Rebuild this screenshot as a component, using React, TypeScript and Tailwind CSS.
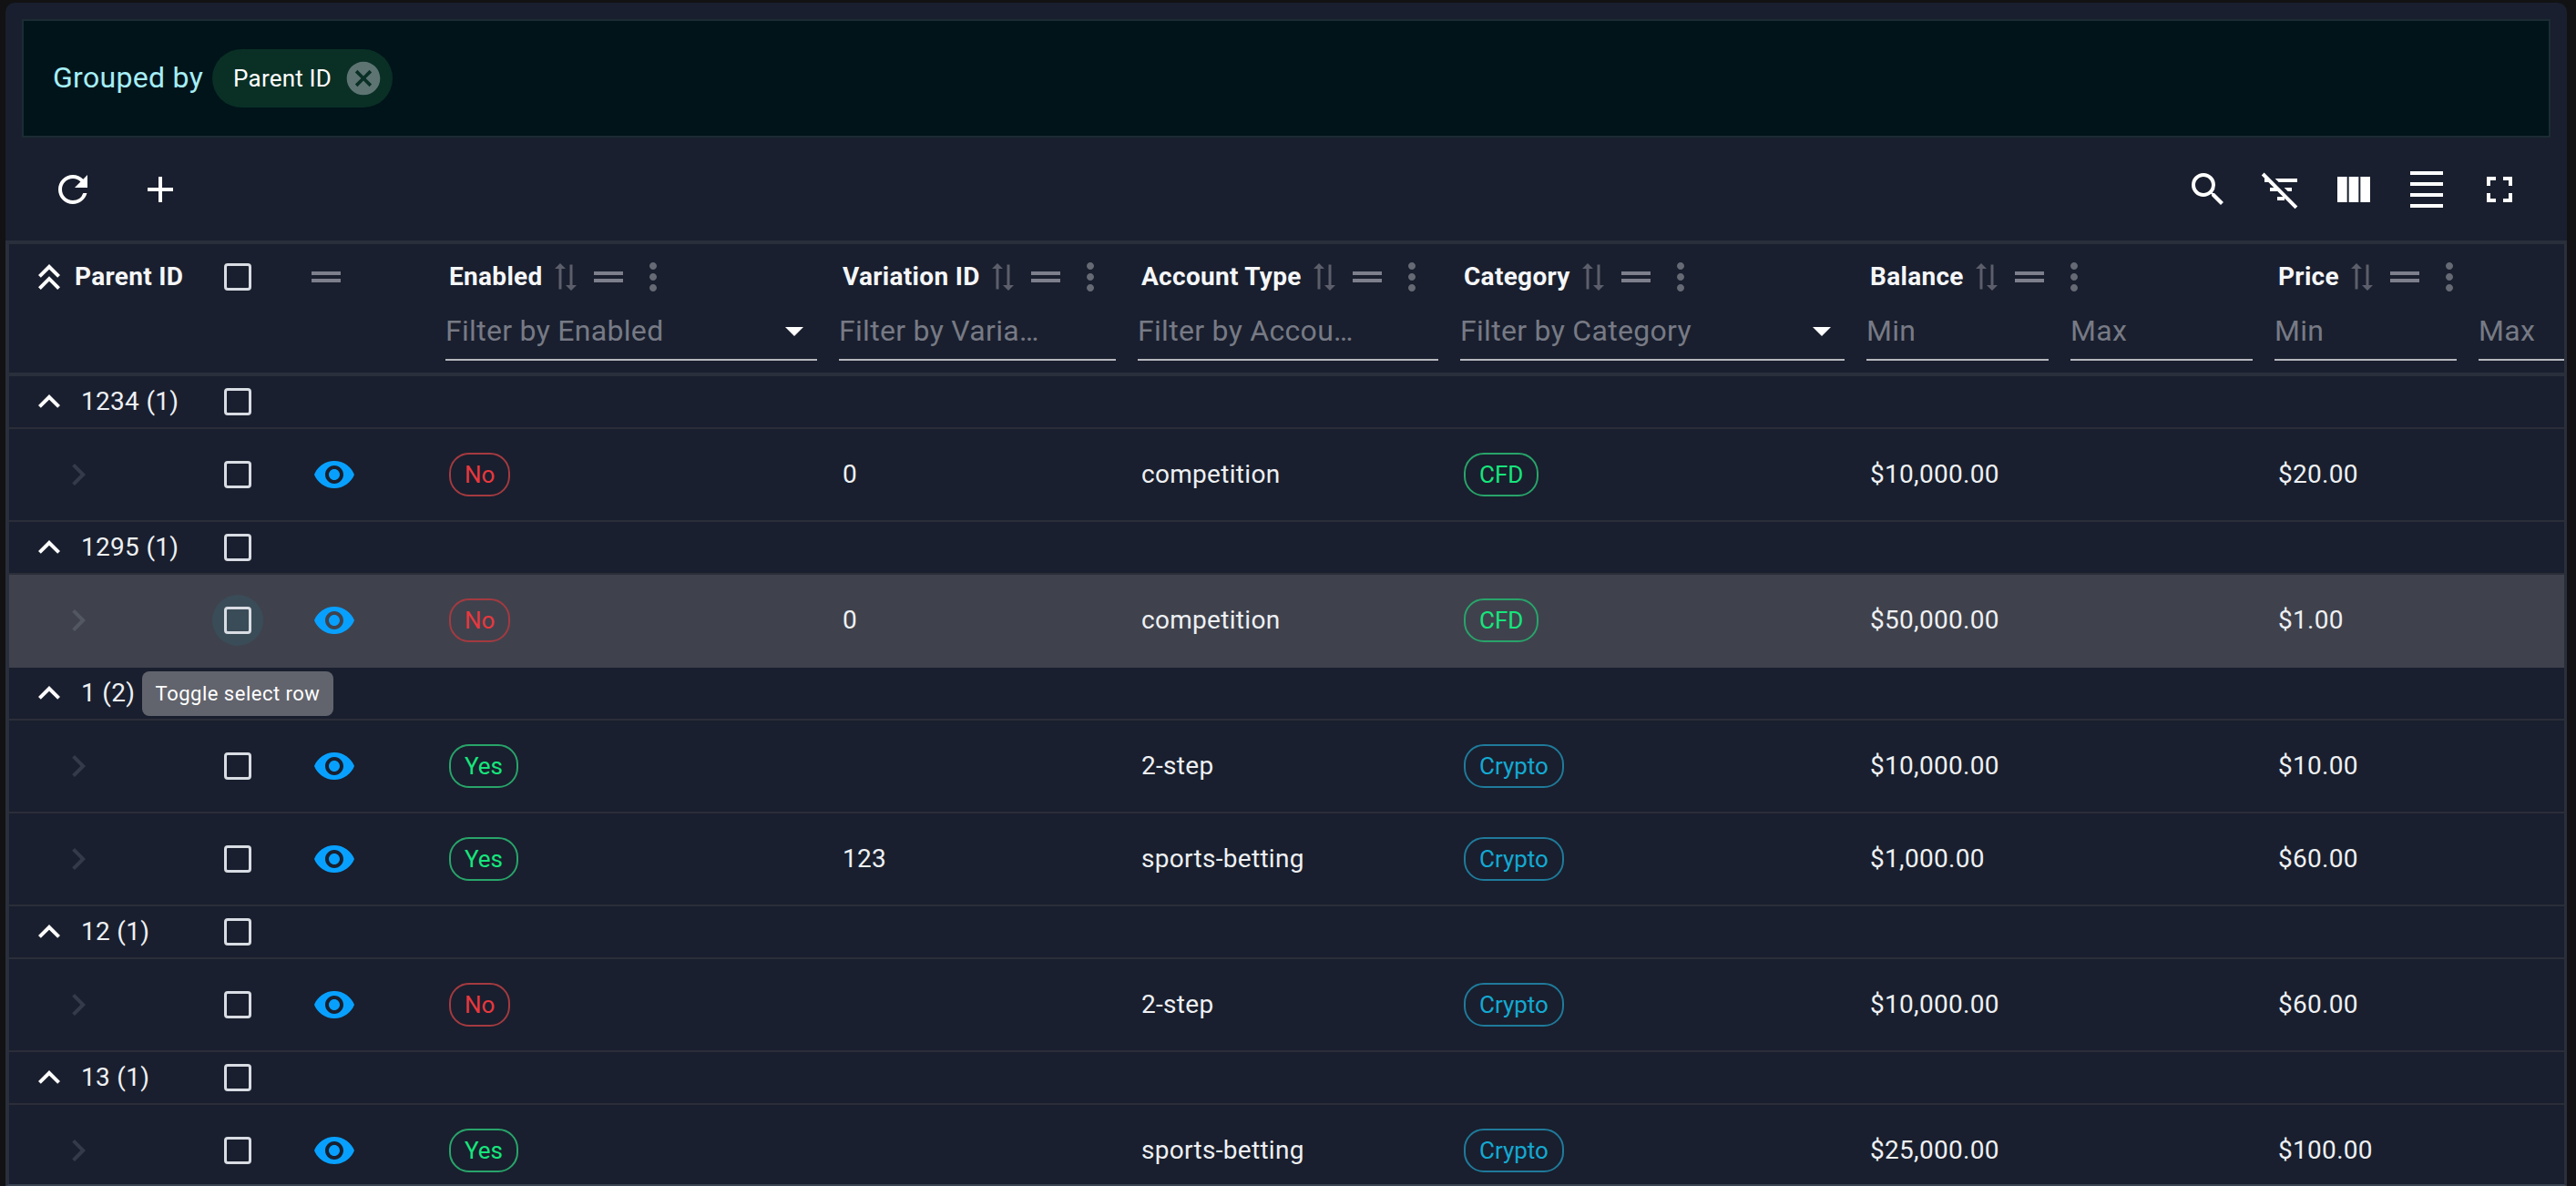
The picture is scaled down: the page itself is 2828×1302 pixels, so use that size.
import {
  MdAdd,
  MdArrowDropDown,
  MdCancel,
  MdChevronRight,
  MdDensitySmall,
  MdDragHandle,
  MdExpandLess,
  MdFilterListOff,
  MdFullscreen,
  MdKeyboardDoubleArrowUp,
  MdMoreVert,
  MdRefresh,
  MdSearch,
  MdSyncAlt,
  MdViewColumn,
  MdVisibility,
} from "react-icons/md";

const gridCols = "grid grid-cols-[206px_90px_171px_432px_328px_354px_446px_448px_448px]";

type Row = {
  enabled: "Yes" | "No";
  variation: string;
  type: string;
  category: "CFD" | "Crypto";
  balance: string;
  price: string;
  hover?: boolean;
};

const groups: { id: string; rows: Row[] }[] = [
  { id: "1234 (1)", rows: [{ enabled: "No", variation: "0", type: "competition", category: "CFD", balance: "$10,000.00", price: "$20.00" }] },
  { id: "1295 (1)", rows: [{ enabled: "No", variation: "0", type: "competition", category: "CFD", balance: "$50,000.00", price: "$1.00", hover: true }] },
  {
    id: "1 (2)",
    rows: [
      { enabled: "Yes", variation: "", type: "2-step", category: "Crypto", balance: "$10,000.00", price: "$10.00" },
      { enabled: "Yes", variation: "123", type: "sports-betting", category: "Crypto", balance: "$1,000.00", price: "$60.00" },
    ],
  },
  { id: "12 (1)", rows: [{ enabled: "No", variation: "", type: "2-step", category: "Crypto", balance: "$10,000.00", price: "$60.00" }] },
  { id: "13 (1)", rows: [{ enabled: "Yes", variation: "", type: "sports-betting", category: "Crypto", balance: "$25,000.00", price: "$100.00" }] },
];

const Checkbox = () => (
  <div className="w-[30px] h-[30px] border-[3px] border-[#d8dce3] rounded-[4px] shrink-0" />
);

const Badge = ({ label }: { label: string }) => {
  const tone =
    label === "No"
      ? "border-[#a43a40] text-[#e8383e]"
      : label === "Crypto"
        ? "border-[#1f7a9b] text-[#14a9d2]"
        : "border-[#28a46a] text-[#16e67c]";
  return (
    <span className={`inline-flex items-center h-[48px] px-[15px] border-2 rounded-[22px] text-[26px] tracking-normal ${tone}`}>
      {label}
    </span>
  );
};

const ColumnTitle = ({ title }: { title: string }) => (
  <div className="flex items-center h-[48px] pl-[16px]">
    <span className="text-[28px] font-bold tracking-[0.3px] text-[#f5f6f8] whitespace-nowrap">{title}</span>
    <MdSyncAlt className="ml-[7px] w-[36px] h-[36px] rotate-90 text-[#5c5f6b] shrink-0" />
    <MdDragHandle className="ml-[5px] w-[48px] h-[48px] text-[#7d7f8c] shrink-0" />
    <MdMoreVert className="ml-[1px] w-[48px] h-[48px] text-[#666a75] shrink-0" />
  </div>
);

const FilterInput = ({ text, select }: { text: string; select?: boolean }) => (
  <div className="flex items-center justify-between h-[58px] pb-[6px] border-b-2 border-[#b5b7bd]">
    <span className="text-[32px] tracking-[0.3px] text-[#777a85] whitespace-nowrap">{text}</span>
    {select && <MdArrowDropDown className="w-[48px] h-[48px] text-white mr-[1px] shrink-0" />}
  </div>
);

const HeaderCell = ({ title, filter, select }: { title: string; filter: string; select?: boolean }) => (
  <div className="pt-[12px]">
    <ColumnTitle title={title} />
    <div className="px-[12px] mt-[10px]">
      <FilterInput text={filter} select={select} />
    </div>
  </div>
);

const RangeHeaderCell = ({ title }: { title: string }) => (
  <div className="pt-[12px]">
    <ColumnTitle title={title} />
    <div className="grid grid-cols-2 gap-[24px] px-[12px] mt-[10px]">
      <FilterInput text="Min" />
      <FilterInput text="Max" />
    </div>
  </div>
);

const Header = () => (
  <div className={`${gridCols} h-[145px] border-b-4 border-[#2a2f3c]`}>
    <div className="flex items-start pt-[12px] pl-[20px]">
      <MdKeyboardDoubleArrowUp className="w-[48px] h-[48px] text-white shrink-0" />
      <span className="ml-[4px] mt-[3px] text-[28px] font-bold tracking-[0.3px] text-[#f5f6f8] whitespace-nowrap">Parent ID</span>
    </div>
    <div className="flex justify-center pt-[21px]">
      <Checkbox />
    </div>
    <div className="pt-[12px] pl-[28px]">
      <MdDragHandle className="w-[48px] h-[48px] text-[#7d7f8c]" />
    </div>
    <HeaderCell title="Enabled" filter="Filter by Enabled" select />
    <HeaderCell title="Variation ID" filter="Filter by Varia…" />
    <HeaderCell title="Account Type" filter="Filter by Accou…" />
    <HeaderCell title="Category" filter="Filter by Category" select />
    <RangeHeaderCell title="Balance" />
    <RangeHeaderCell title="Price" />
  </div>
);

const GroupRow = ({ label, tooltip }: { label: string; tooltip?: boolean }) => (
  <div className={`${gridCols} relative h-[58px] border-b-2 border-[#2b2e39]`}>
    <div className="flex items-center pl-[20px]">
      <MdExpandLess className="w-[48px] h-[48px] text-white shrink-0" />
      <span className="ml-[11px] text-[28px] tracking-[0.3px] text-[#eef0f3] whitespace-nowrap">{label}</span>
    </div>
    <div className="flex items-center justify-center">{!tooltip && <Checkbox />}</div>
    {tooltip && (
      <div className="absolute left-[146px] top-[4px] h-[49px] w-[210px] flex items-center justify-center rounded-[8px] bg-[#62646d] text-[22px] tracking-[0.5px] text-white whitespace-nowrap">
        Toggle select row
      </div>
    )}
  </div>
);

const DataRow = ({ row }: { row: Row }) => (
  <div className={`${gridCols} items-center h-[102px] border-b-2 text-[28px] tracking-[0.3px] text-[#eef0f3] ${row.hover ? "bg-[#3f424d] border-[#3f424d]" : "border-[#2b2e39]"}`}>
    <div className="pl-[52px]">
      <MdChevronRight className={`w-[48px] h-[48px] ${row.hover ? "text-[#525762]" : "text-[#343a4a]"}`} />
    </div>
    <div className="flex justify-center">
      {row.hover ? (
        <div className="flex items-center justify-center w-[56px] h-[56px] rounded-full bg-[#3a4c58]">
          <Checkbox />
        </div>
      ) : (
        <Checkbox />
      )}
    </div>
    <div className="pl-[37px]">
      <MdVisibility className="w-[48px] h-[48px] text-[#08a0ff]" />
    </div>
    <div className="pl-[16px]">
      <Badge label={row.enabled} />
    </div>
    <div className="pl-[16px]">{row.variation}</div>
    <div className="pl-[16px]">{row.type}</div>
    <div className="pl-[16px]">
      <Badge label={row.category} />
    </div>
    <div className="pl-[16px]">{row.balance}</div>
    <div className="pl-[16px]">{row.price}</div>
  </div>
);

const ToolButton = ({ children }: { children: React.ReactNode }) => (
  <div className="flex items-center justify-center w-[80px] h-[80px] text-white">{children}</div>
);

export default function App() {
  return (
    <div className="w-[2828px] h-[1302px] overflow-hidden bg-[#121214] pt-[3px] pl-[6px] pr-[10px] font-['Roboto',sans-serif]">
      <div className="h-[1299px] flex flex-col overflow-hidden rounded-t-[10px] bg-[#191f2e]">
        {/* Group banner */}
        <div className="flex items-center shrink-0 h-[130px] mt-[18px] mx-[18px] pl-[32px] border-2 border-[#1c2c34] bg-[#01141a]">
          <span className="text-[32px] tracking-[0.3px] text-[#a6eef6] whitespace-nowrap mb-[3px]">Grouped by</span>
          <div className="flex items-center h-[64px] ml-[10px] pl-[23px] pr-[10px] rounded-full bg-[#0a3025]">
            <span className="text-[26px] tracking-[0.2px] text-white whitespace-nowrap">Parent ID</span>
            <MdCancel className="ml-[13px] w-[44px] h-[44px] text-[#5e7473]" />
          </div>
        </div>

        {/* Toolbar */}
        <div className="flex items-center justify-between shrink-0 h-[113px] px-[34px]">
          <div className="flex items-center gap-[16px]">
            <ToolButton><MdRefresh className="w-[48px] h-[48px]" /></ToolButton>
            <ToolButton><MdAdd className="w-[48px] h-[48px]" /></ToolButton>
          </div>
          <div className="flex items-center">
            <ToolButton><MdSearch className="w-[48px] h-[48px]" /></ToolButton>
            <ToolButton><MdFilterListOff className="w-[48px] h-[48px]" /></ToolButton>
            <ToolButton><MdViewColumn className="w-[48px] h-[48px]" /></ToolButton>
            <ToolButton><MdDensitySmall className="w-[48px] h-[48px]" /></ToolButton>
            <ToolButton><MdFullscreen className="w-[48px] h-[48px]" /></ToolButton>
          </div>
        </div>

        {/* Table */}
        <div className="flex-1 min-h-0 overflow-hidden border-x-[3px] border-l-[4px] border-t-4 border-b-2 border-[#2a2f3c] border-b-[#3a4352]">
          <Header />
          {groups.map((group) => (
            <div key={group.id}>
              <GroupRow label={group.id} tooltip={group.id === "1 (2)"} />
              {group.rows.map((row, i) => (
                <DataRow key={i} row={row} />
              ))}
            </div>
          ))}
        </div>
      </div>
    </div>
  );
}
